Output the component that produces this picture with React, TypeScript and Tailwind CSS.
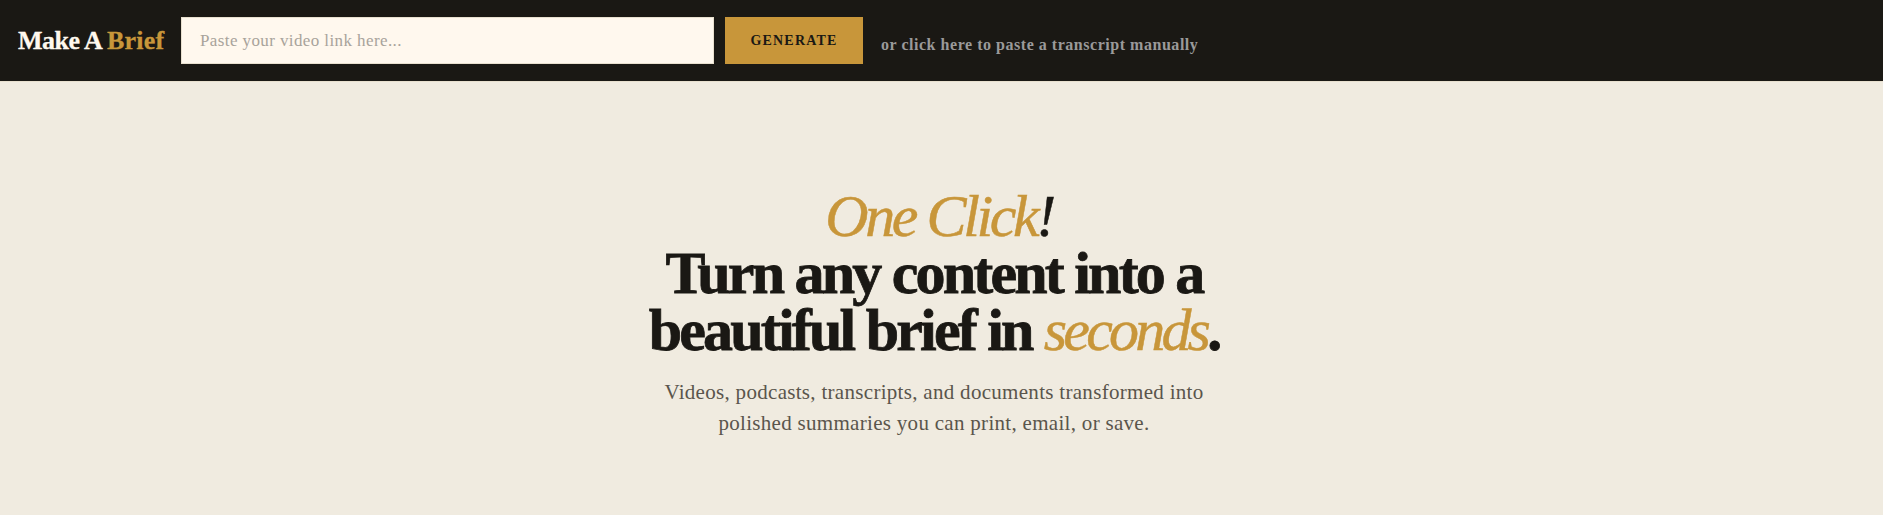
export default function App() {
  return (
    <div className="min-h-[515px] bg-[#f0ebe0] font-['Liberation_Serif',serif]">
      <header className="flex h-[82px] items-center border-b border-[#e8e0cf] bg-[#1a1814] pl-[18px]">
        <div className="mt-[1px] w-[163px] whitespace-nowrap text-[26px] font-bold leading-none tracking-[-0.5px] text-[#fff8ee] [-webkit-text-stroke:0.3px]">
          Make A <span className="tracking-[0.2px] text-[#c8963a]">Brief</span>
        </div>
        <div className="flex h-[47px] w-[533px] items-center border border-[#e8e0cf] bg-[#fff8ee] pl-[18px] pt-[1px] text-[17px] tracking-[0.4px] text-[#a8a39b]">
          Paste your video link here...
        </div>
        <button className="ml-[11px] h-[47px] w-[138px] bg-[#c8963a] text-[14px] font-bold tracking-[1.2px] text-[#1a1814]">
          GENERATE
        </button>
        <span className="ml-[18px] mt-[8px] whitespace-nowrap text-[16px] font-bold tracking-[0.53px] text-[#9a9a9a]">
          or click here to paste a transcript manually
        </span>
      </header>
      <main className="flex flex-col items-center pr-[15px] pt-[106px] text-center">
        <h1 className="text-[60px] font-bold leading-[57px] tracking-[-2.8px] text-[#1a1814] [-webkit-text-stroke:0.8px]">
          <span className="pl-[10px] font-normal italic tracking-[-3.4px] [-webkit-text-stroke:0.5px]">
            <span className="text-[#c8963a]">One Click</span>!
          </span>
          <br />
          Turn any content into a
          <br />
          beautiful brief in{" "}
          <span className="font-normal italic tracking-[-3.8px] text-[#c8963a] [-webkit-text-stroke:0.5px]">seconds</span>.
        </h1>
        <p className="mt-[18px] text-[21px] leading-[31px] tracking-[0.3px] text-[#5a554c]">
          Videos, podcasts, transcripts, and documents transformed into
          <br />
          polished summaries you can print, email, or save.
        </p>
      </main>
    </div>
  );
}
